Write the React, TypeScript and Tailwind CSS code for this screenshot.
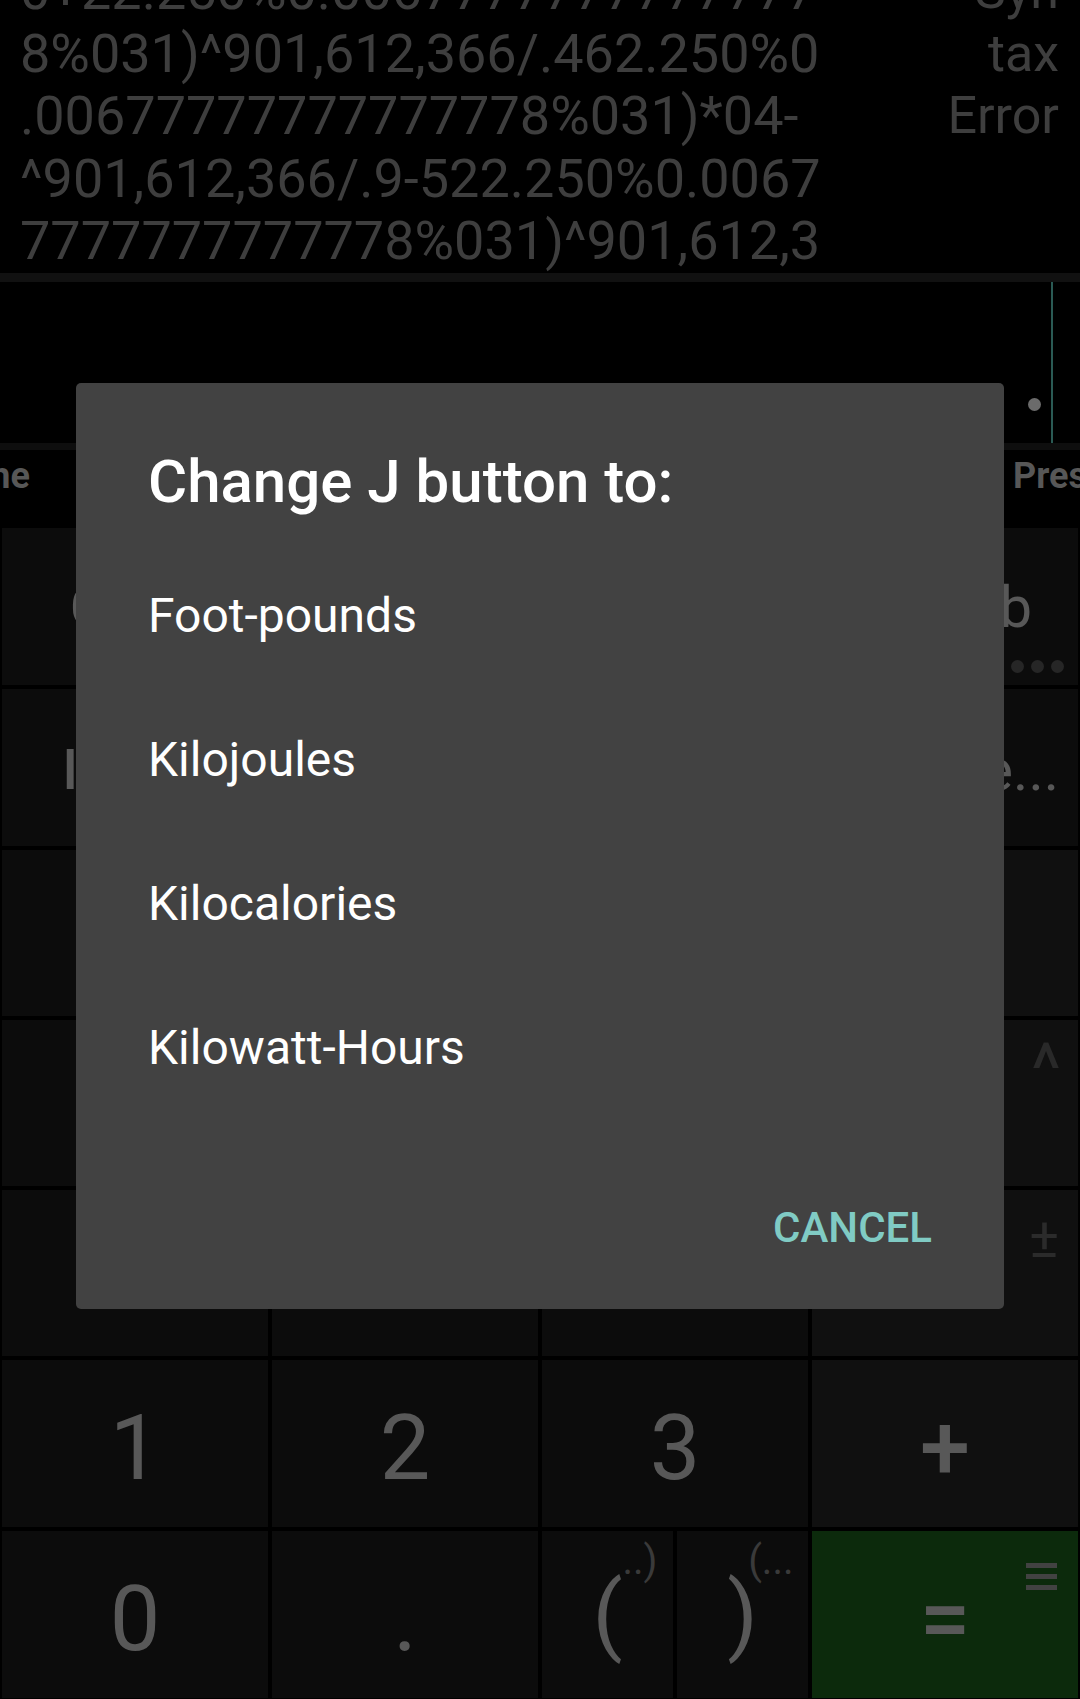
import React from "react";

const exprLines = [
  "0+22.250%0.0067" + "7".repeat(12),
  "8%031)^901,612,366/.462.250%0",
  ".006" + "7".repeat(13) + "8%031)*04-",
  "^901,612,366/.9-522.250%0.0067",
  "7".repeat(12) + "8%031)^901,612,3",
];

function Key({ className = "", children }: { className?: string; children?: React.ReactNode }) {
  return <div className={`relative flex justify-center overflow-hidden ${className}`}>{children}</div>;
}

function Digit({ children, bold = false }: { children: React.ReactNode; bold?: boolean }) {
  return (
    <span className={`mt-[10px] text-[90px] leading-[90px] text-[#585858] ${bold ? "font-medium" : ""}`}>
      {children}
    </span>
  );
}

export default function App() {
  return (
    <div className="relative w-[1080px] h-[1699px] overflow-hidden bg-black font-['Roboto',sans-serif]">
      {/* expression / result */}
      <div className="h-[273px] overflow-hidden">
        <div className="-mt-[40px] flex pl-[20px] pr-[21px]">
          <div className="flex-1 whitespace-nowrap text-[54px] leading-[62.5px] text-[#3e3e3e]">
            {exprLines.map((l, i) => (
              <div key={i}>{l}</div>
            ))}
          </div>
          <div className="text-right text-[52px] leading-[62.5px] text-[#3e3e3e]">
            <div>Syn</div>
            <div>tax</div>
            <div>Error</div>
          </div>
        </div>
      </div>
      <div className="h-[9px] bg-[#111111]" />
      {/* input line */}
      <div className="flex h-[161px] items-end justify-end pr-[27px]">
        <div className="mb-[32px] h-[13px] w-[13px] rounded-full bg-[#6b6b6b]" />
        <div className="ml-[10px] h-full w-[2px] bg-[#2a5a54]" />
      </div>
      <div className="h-[7px] bg-[#0e0e0e]" />
      {/* tabs */}
      <div className="flex h-[78px] pt-[5px] text-[36px] font-bold leading-[42px] text-[#575757]">
        <div className="flex w-[30px] justify-end overflow-hidden">
          <span className="whitespace-nowrap">Time</span>
        </div>
        <div className="flex-1" />
        <div className="w-[67px] overflow-hidden">
          <span className="whitespace-nowrap">Presets</span>
        </div>
      </div>
      {/* keypad */}
      <div className="flex flex-col gap-[4px] px-[2px]">
        <div className="grid h-[157px] grid-cols-4 gap-[4px]">
          <Key className="items-start bg-[#0c0c0c]">
            <span className="pt-[51px] text-[58px] leading-[56px] text-[#585858]">Conv</span>
          </Key>
          <Key className="items-start bg-[#0c0c0c]">
            <span className="pt-[51px] text-[58px] leading-[56px] text-[#585858]">J</span>
          </Key>
          <Key className="items-start bg-[#0c0c0c]">
            <span className="pt-[51px] text-[58px] leading-[56px] text-[#585858]">kJ</span>
          </Key>
          <Key className="items-start justify-end bg-[#0c0c0c] pr-[46px]">
            <span className="pt-[51px] text-[58px] leading-[56px] text-[#585858]">ft·lb</span>
            <div className="absolute bottom-[12px] right-[14px] flex gap-[7px]">
              <div className="h-[13px] w-[13px] rounded-full bg-[#262626]" />
              <div className="h-[13px] w-[13px] rounded-full bg-[#262626]" />
              <div className="h-[13px] w-[13px] rounded-full bg-[#262626]" />
            </div>
          </Key>
        </div>
        <div className="grid h-[157px] grid-cols-4 gap-[4px]">
          <Key className="items-start bg-[#0c0c0c]">
            <span className="pt-[53px] text-[56px] font-medium leading-[56px] text-[#585858]">Insert</span>
          </Key>
          <Key className="items-start bg-[#0c0c0c]">
            <span className="pt-[53px] text-[58px] leading-[56px] text-[#585858]">√</span>
          </Key>
          <Key className="items-start bg-[#0c0c0c]">
            <span className="pt-[53px] text-[58px] leading-[56px] text-[#585858]">%</span>
          </Key>
          <Key className="items-start justify-end bg-[#0c0c0c] pr-[19px]">
            <span className="whitespace-nowrap pt-[53px] text-[58px] leading-[56px] text-[#585858]">Degree...</span>
          </Key>
        </div>
        <div className="grid h-[166px] grid-cols-4 gap-[4px]">
          <Key className="items-center bg-[#0c0c0c]"><Digit>7</Digit></Key>
          <Key className="items-center bg-[#0c0c0c]"><Digit>8</Digit></Key>
          <Key className="items-center bg-[#0c0c0c]"><Digit>9</Digit></Key>
          <Key className="items-center bg-[#101010]"><Digit>÷</Digit></Key>
        </div>
        <div className="grid h-[166px] grid-cols-4 gap-[4px]">
          <Key className="items-center bg-[#0c0c0c]"><Digit>4</Digit></Key>
          <Key className="items-center bg-[#0c0c0c]"><Digit>5</Digit></Key>
          <Key className="items-center bg-[#0c0c0c]"><Digit>6</Digit></Key>
          <Key className="items-center bg-[#101010]">
            <Digit>×</Digit>
            <span className="absolute right-[17px] top-[14px] text-[72px] leading-none text-[#292929]">^</span>
          </Key>
        </div>
        <div className="grid h-[166px] grid-cols-4 gap-[4px]">
          <Key className="items-center bg-[#0c0c0c]" />
          <Key className="items-center bg-[#0c0c0c]" />
          <Key className="items-center bg-[#0c0c0c]" />
          <Key className="items-center bg-[#101010]">
            <span className="absolute right-[19px] top-[20px] text-[56px] leading-none text-[#2b2b2b]">±</span>
          </Key>
        </div>
        <div className="grid h-[167px] grid-cols-4 gap-[4px]">
          <Key className="items-center bg-[#0c0c0c]"><Digit>1</Digit></Key>
          <Key className="items-center bg-[#0c0c0c]"><Digit>2</Digit></Key>
          <Key className="items-center bg-[#0c0c0c]"><Digit>3</Digit></Key>
          <Key className="items-center bg-[#101010]"><Digit bold>+</Digit></Key>
        </div>
        <div className="grid h-[167px] grid-cols-4 gap-[4px]">
          <Key className="items-center bg-[#0c0c0c]"><Digit>0</Digit></Key>
          <Key className="items-center bg-[#0c0c0c]"><Digit>.</Digit></Key>
          <div className="flex gap-[4px]">
            <Key className="flex-1 items-center bg-[#0c0c0c]">
              <span className="relative mt-[-2px] text-[88px] leading-[90px] text-[#585858]">
                (
                <span className="absolute left-[30px] top-[-28px] whitespace-nowrap text-[40px] leading-[40px] text-[#3a3a3a]">..)</span>
              </span>
            </Key>
            <Key className="flex-1 items-center bg-[#0c0c0c]">
              <span className="relative mt-[-2px] text-[88px] leading-[90px] text-[#585858]">
                )
                <span className="absolute left-[21px] top-[-28px] whitespace-nowrap text-[40px] leading-[40px] text-[#3a3a3a]">(...</span>
              </span>
            </Key>
          </div>
          <Key className="items-center bg-[#0c2a0c]">
            <Digit bold>=</Digit>
            <svg className="absolute right-[21px] top-[32px]" width="31" height="27" viewBox="0 0 31 27">
              <rect x="0" y="0" width="31" height="5" fill="#424242" />
              <rect x="0" y="11" width="31" height="5" fill="#424242" />
              <rect x="0" y="22" width="31" height="5" fill="#424242" />
            </svg>
          </Key>
        </div>
      </div>

      {/* dialog */}
      <div className="absolute left-[76px] top-[383px] flex h-[926px] w-[928px] flex-col rounded-[5px] bg-[#424242]">
        <div className="px-[72px] pt-[69px] text-[60px] font-medium leading-[60px] text-white">Change J button to:</div>
        <div className="mt-[32px] flex flex-col">
          {["Foot-pounds", "Kilojoules", "Kilocalories", "Kilowatt-Hours"].map((t) => (
            <div key={t} className="h-[144px] px-[72px] text-[48px] leading-[144px] text-white">
              {t}
            </div>
          ))}
        </div>
        <div className="mt-[87px] flex justify-end pr-[72px]">
          <span className="text-[42px] font-medium leading-[42px] text-[#80cbc4]">CANCEL</span>
        </div>
      </div>
    </div>
  );
}
